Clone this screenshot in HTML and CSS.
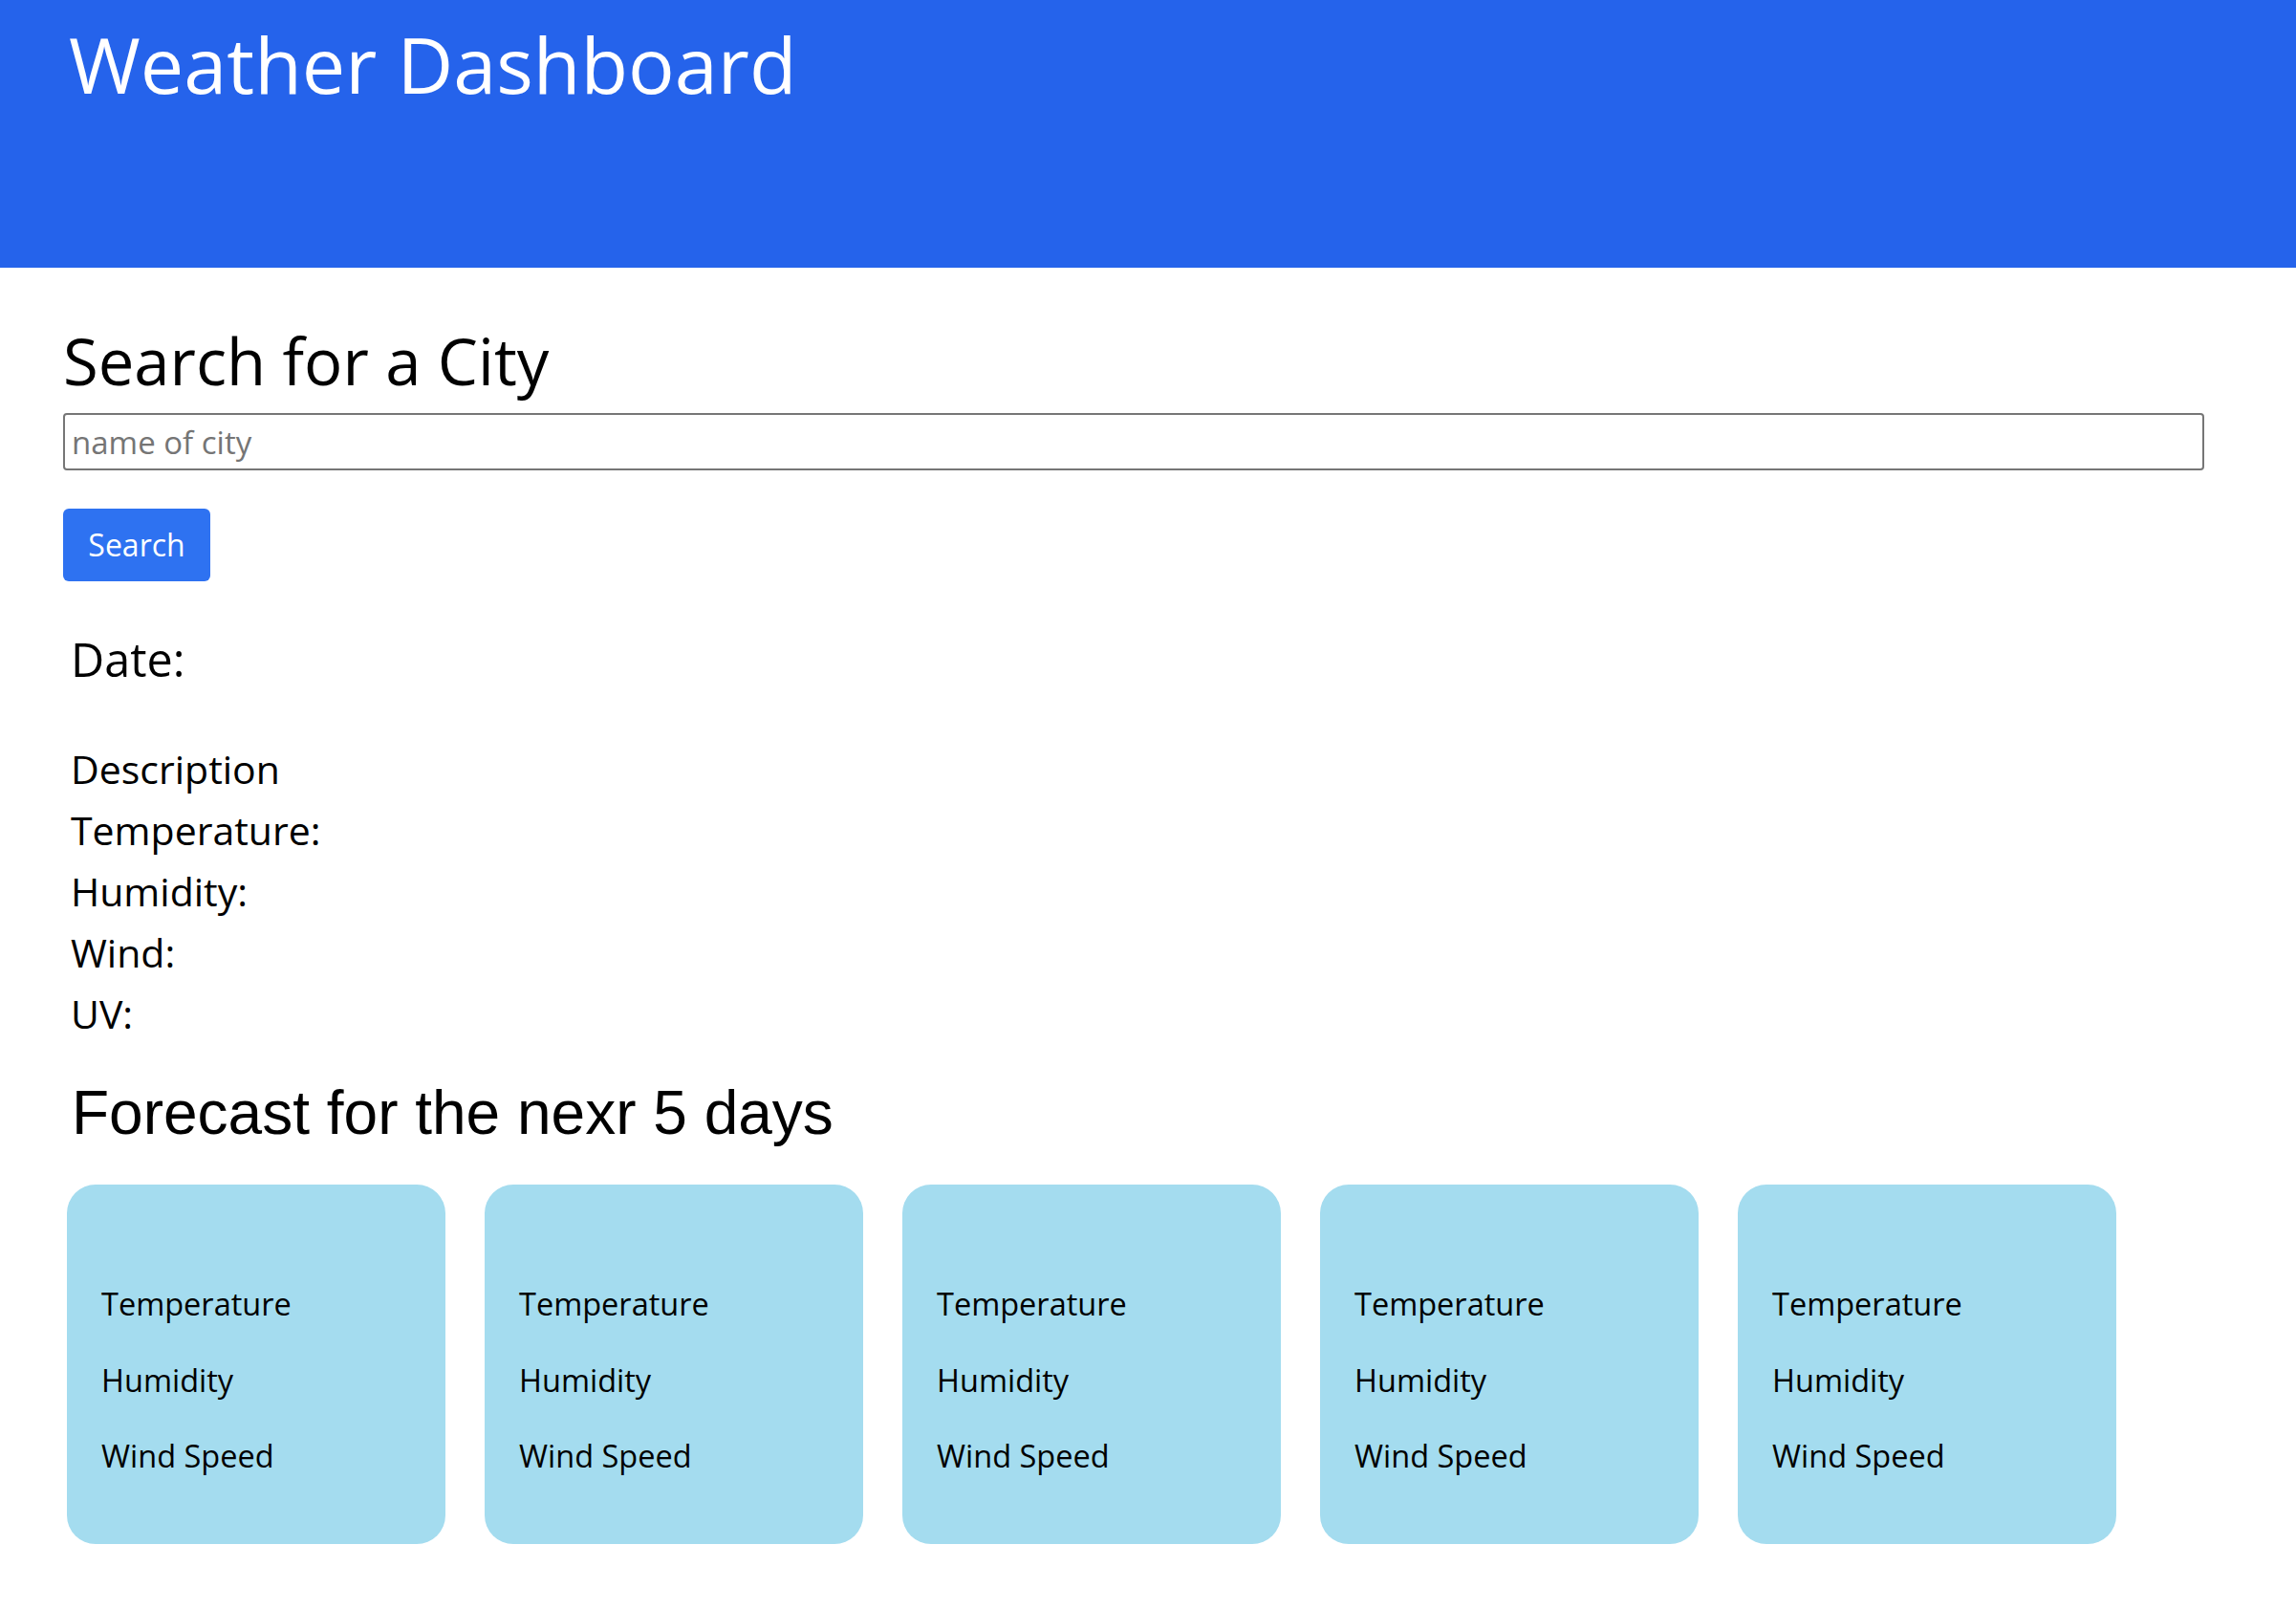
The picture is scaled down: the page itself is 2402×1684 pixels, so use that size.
FILE: index.html
```html
<!DOCTYPE html>
<html lang="en">
<head>
<meta charset="utf-8">
<title>Weather Dashboard</title>
<link rel="stylesheet" href="styles.css">
</head>
<body>
<header class="site-header">
  <h1 class="site-title">Weather Dashboard</h1>
</header>
<main class="page">
  <section class="search">
    <h2 class="search-title">Search for a City</h2>
    <input class="search-input" type="text" placeholder="name of city">
    <button class="search-btn" type="button">Search</button>
  </section>
  <section class="current">
    <h3 class="current-date">Date:</h3>
    <div class="current-list">
      <p class="current-item">Description</p>
      <p class="current-item">Temperature:</p>
      <p class="current-item">Humidity:</p>
      <p class="current-item">Wind:</p>
      <p class="current-item">UV:</p>
    </div>
  </section>
  <section class="forecast">
    <h3 class="forecast-title">Forecast for the nexr 5 days</h3>
    <div class="cards">
      <div class="card"><p class="card-line">Temperature</p><p class="card-line">Humidity</p><p class="card-line">Wind Speed</p></div>
      <div class="card"><p class="card-line">Temperature</p><p class="card-line">Humidity</p><p class="card-line">Wind Speed</p></div>
      <div class="card"><p class="card-line">Temperature</p><p class="card-line">Humidity</p><p class="card-line">Wind Speed</p></div>
      <div class="card"><p class="card-line">Temperature</p><p class="card-line">Humidity</p><p class="card-line">Wind Speed</p></div>
      <div class="card"><p class="card-line">Temperature</p><p class="card-line">Humidity</p><p class="card-line">Wind Speed</p></div>
    </div>
  </section>
</main>
</body>
</html>
```
FILE: styles.css
```css
html, body {
  margin: 0;
  padding: 0;
  background: #ffffff;
}

body {
  font-family: "Open Sans", "Noto Sans", "DejaVu Sans", sans-serif;
  color: #000000;
}

.site-header {
  background: #2563eb;
  height: 280px;
  box-sizing: border-box;
  padding: 17px 72px 0;
}

.site-title {
  margin: 0;
  font-size: 81px;
  line-height: 100px;
  font-weight: 400;
  color: #ffffff;
}

.page {
  padding: 0 0 60px 66px;
}

.search-title {
  margin: 57px 0 0;
  font-size: 67px;
  line-height: 80px;
  font-weight: 400;
}

.search-input {
  display: block;
  margin-top: 15px;
  width: 2240px;
  height: 60px;
  box-sizing: border-box;
  border: 2px solid #767676;
  border-radius: 4px;
  padding: 0 7px;
  font-family: inherit;
  font-size: 33px;
  color: #000000;
  background: #ffffff;
  outline: none;
}

.search-input::placeholder {
  color: #757575;
}

.search-btn {
  display: block;
  margin-top: 40px;
  width: 154px;
  height: 76px;
  border: none;
  border-radius: 6px;
  background: #2e72f1;
  color: #ffffff;
  font-family: inherit;
  font-size: 32px;
  line-height: 76px;
  padding: 0;
}

.current {
  padding-left: 8px;
}

.current-date {
  margin: 51px 0 0;
  font-size: 48.5px;
  line-height: 60px;
  font-weight: 400;
}

.current-list {
  margin-top: 53px;
}

.current-item {
  margin: 0;
  font-size: 41px;
  line-height: 64px;
}

.forecast-title {
  margin: 32px 0 0 9px;
  font-family: "Liberation Sans", Arial, sans-serif;
  font-size: 64px;
  line-height: 80px;
  font-weight: 400;
}

.cards {
  display: flex;
  gap: 41px;
  margin: 35px 0 0 4px;
}

.card {
  width: 396px;
  height: 376px;
  box-sizing: border-box;
  background: #a4dcef;
  border-radius: 30px;
  padding: 105px 0 0 36px;
  display: flex;
  flex-direction: column;
  gap: 39.5px;
}

.card-line {
  margin: 0;
  font-size: 32.5px;
  line-height: 40px;
}
```
